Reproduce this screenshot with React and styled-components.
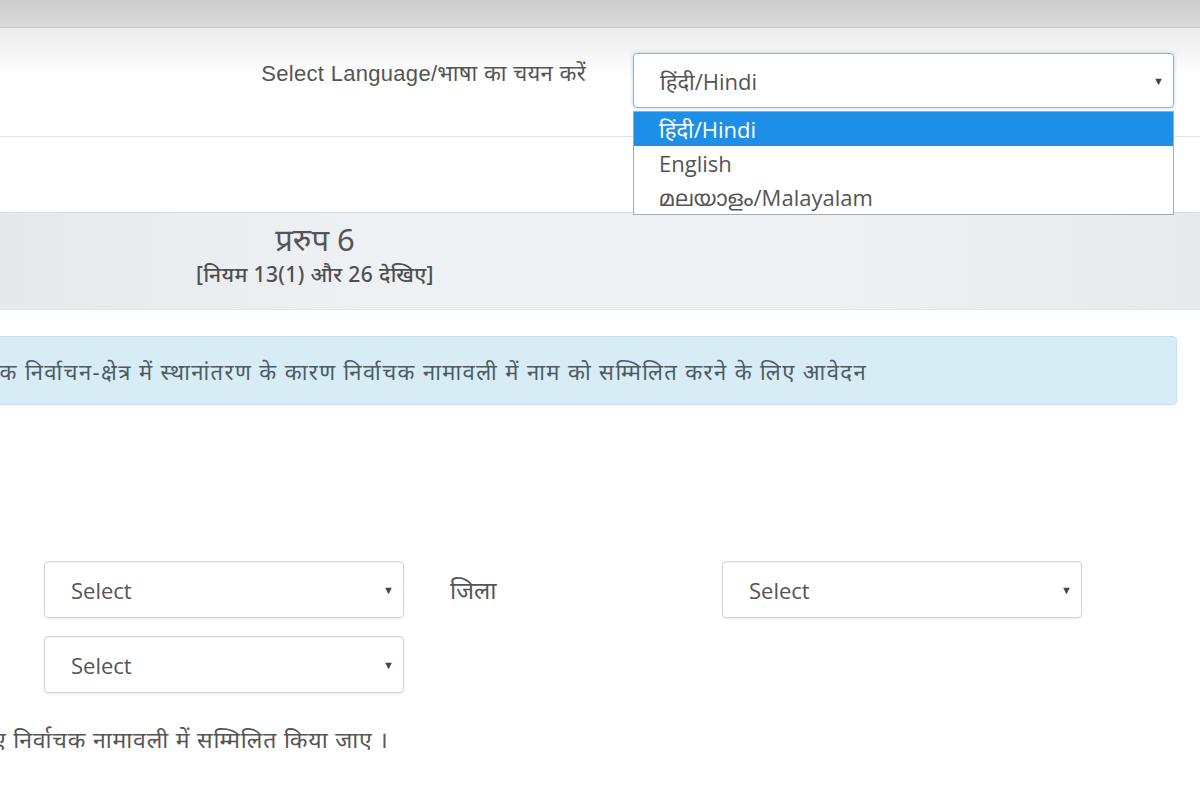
import React from 'react'
import styled, { createGlobalStyle } from 'styled-components'

const GlobalStyle = createGlobalStyle`
  html, body {
    margin: 0;
    padding: 0;
    background: #ffffff;
    overflow: hidden;
  }
  * { box-sizing: border-box; }
`

const HINDI = `"Noto Sans", "Noto Sans Devanagari", "Lohit Devanagari", "Noto Sans Malayalam", sans-serif`

const Page = styled.div`
  width: 1200px;
  height: 800px;
  overflow: hidden;
  font-family: ${HINDI};
  color: #555;
`

const TopBar = styled.div`
  height: 28px;
  background: linear-gradient(#cdcdcd, #d9d9d9);
  border-bottom: 1px solid #c9c9c9;
`

const Header = styled.div`
  position: relative;
  height: 109px;
  display: flex;
  justify-content: flex-end;
  align-items: flex-start;
  padding: 25px 26px 0 0;
  background: linear-gradient(#ececec, #ffffff 45%);
  border-bottom: 1px solid #e3e3e3;
`

const LangLabel = styled.div`
  margin-top: 4px;
  margin-right: 47px;
  font-family: "Liberation Sans", ${HINDI};
  font-size: 22px;
  letter-spacing: 0.3px;
  color: #555;
`

const LangPicker = styled.div`
  position: relative;
  width: 541px;
`

const SelectBox = styled.div`
  display: flex;
  align-items: center;
  justify-content: space-between;
  width: 100%;
  height: ${({ height }) => height || '57px'};
  padding: 0 9px 0 26px;
  background: #fff;
  border: 1px solid ${({ focused }) => (focused ? '#8fb4cc' : '#d6d6d6')};
  border-radius: 4px;
  box-shadow: ${({ focused }) =>
    focused ? '0 0 4px rgba(102, 175, 233, 0.45)' : 'inset 0 1px 1px rgba(0,0,0,0.06), 0 1px 2px rgba(0,0,0,0.08)'};
  font-family: "Open Sans", ${HINDI};
  font-size: 22px;
  color: #555;
`

const Caret = styled.span`
  font-size: 11px;
  color: #444;
`

const OptionList = styled.ul`
  position: absolute;
  top: 58px;
  left: 0;
  width: 100%;
  margin: 0;
  padding: 0;
  list-style: none;
  background: #fff;
  border: 1px solid #a9a9a9;
  z-index: 2;
`

const Option = styled.li`
  height: 34px;
  line-height: 34px;
  padding-left: 25px;
  font-family: "Open Sans", ${HINDI};
  font-size: 22px;
  color: ${({ active }) => (active ? '#ffffff' : '#555')};
  background: ${({ active }) => (active ? '#1e8fe6' : 'transparent')};
`

const Spacer = styled.div`
  height: ${({ h }) => h}px;
`

const FormHead = styled.div`
  height: 98px;
  background: linear-gradient(90deg, #e6e9eb, #eef1f3 30%, #eef1f3 70%, #e7eaec);
  border-top: 1px solid #dcdcdc;
  border-bottom: 1px solid #e6e6e6;
  padding-top: 6px;
`

const TitleBlock = styled.div`
  width: 630px;
  text-align: center;
`

const FormTitle = styled.div`
  font-size: 31px;
  line-height: 40px;
  color: #555;
`

const FormRule = styled.div`
  font-size: 21px;
  line-height: 30px;
  font-weight: 500;
  letter-spacing: 0.4px;
  color: #4f4f4f;
`

const Content = styled.div`
  margin-left: -30px;
`

const InfoBox = styled.div`
  width: 1207px;
  height: 69px;
  display: flex;
  align-items: center;
  padding-left: 15px;
  background: #d8ecf6;
  border: 1px solid #c4e2ee;
  border-radius: 4px;
  font-size: 22px;
  letter-spacing: 1.4px;
  color: #4d5b63;
`

const FieldGrid = styled.div`
  display: grid;
  grid-template-columns: 360px 318px 360px;
  row-gap: 18px;
  padding-left: 74px;
  align-items: center;
`

const FieldLabel = styled.div`
  padding-left: 46px;
  font-size: 24px;
  color: #555;
`

const Note = styled.div`
  font-size: 23px;
  letter-spacing: 0.8px;
  color: #555;
  text-indent: 23px;
`

const Select = ({ children = 'Select', focused, height }) => (
  <SelectBox focused={focused} height={height}>
    <span>{children}</span>
    <Caret>▼</Caret>
  </SelectBox>
)

const languages = ['हिंदी/Hindi', 'English', 'മലയാളം/Malayalam']

export default function App() {
  return (
    <Page>
      <GlobalStyle />
      <TopBar />
      <Header>
        <LangLabel>Select Language/भाषा का चयन करें</LangLabel>
        <LangPicker>
          <Select focused height="55px">हिंदी/Hindi</Select>
          <OptionList>
            {languages.map((l, i) => (
              <Option key={l} active={i === 0}>{l}</Option>
            ))}
          </OptionList>
        </LangPicker>
      </Header>
      <Spacer h={75} />
      <FormHead>
        <TitleBlock>
          <FormTitle>प्ररुप 6</FormTitle>
          <FormRule>[नियम 13(1) और 26 देखिए]</FormRule>
        </TitleBlock>
      </FormHead>
      <Spacer h={26} />
      <Content>
        <InfoBox>
          एक निर्वाचन-क्षेत्र में स्थानांतरण के कारण निर्वाचक नामावली में नाम को सम्मिलित करने के लिए आवेदन
        </InfoBox>
        <Spacer h={156} />
        <FieldGrid>
          <Select />
          <FieldLabel>जिला</FieldLabel>
          <Select />
          <Select />
        </FieldGrid>
        <Spacer h={30} />
        <Note>ए निर्वाचक नामावली में सम्मिलित किया जाए ।</Note>
      </Content>
    </Page>
  )
}
